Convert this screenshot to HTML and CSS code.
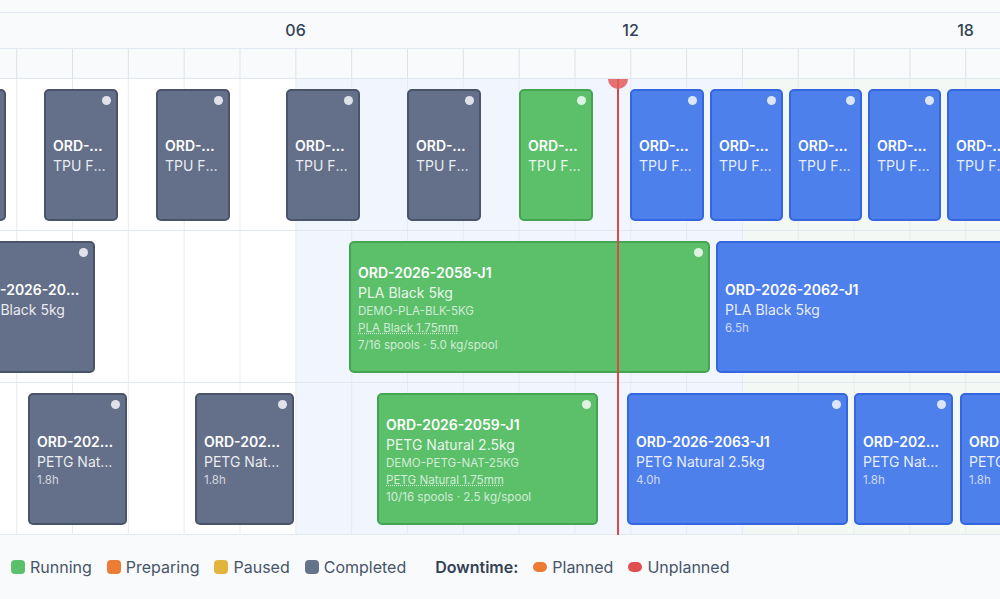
FILE: index.html
```html
<!DOCTYPE html>
<html lang="en">
<head>
    <meta charset="UTF-8">
    <meta name="viewport" content="width=device-width, initial-scale=1.0">
    <title>Production schedule</title>
    <link rel="stylesheet" href="styles.css">
</head>
<body>
    <div class="gantt">
        <div class="day-band"></div>

        <!-- Eje de horas -->
        <div class="axis-labels">
            <span class="hour-label">00</span>
            <span class="hour-label">06</span>
            <span class="hour-label">12</span>
            <span class="hour-label">18</span>
        </div>
        <div class="axis-ticks"></div>

        <!-- Filas de maquinas -->
        <div class="rows">
            <div class="row">
                <div class="job job-completed" style="left:-68px;width:74px"><b class="job-title">ORD-2026-2040-J1</b><span class="job-sub">TPU Flex 1kg</span></div>
                <div class="job job-completed" style="left:44px;width:74px"><b class="job-title">ORD-2026-2042-J1</b><span class="job-sub">TPU Flex 1kg</span></div>
                <div class="job job-completed" style="left:156px;width:74px"><b class="job-title">ORD-2026-2044-J1</b><span class="job-sub">TPU Flex 1kg</span></div>
                <div class="job job-completed" style="left:286px;width:74px"><b class="job-title">ORD-2026-2046-J1</b><span class="job-sub">TPU Flex 1kg</span></div>
                <div class="job job-completed" style="left:407px;width:74px"><b class="job-title">ORD-2026-2048-J1</b><span class="job-sub">TPU Flex 1kg</span></div>
                <div class="job job-running" style="left:519px;width:74px"><b class="job-title">ORD-2026-2050-J1</b><span class="job-sub">TPU Flex 1kg</span></div>
                <div class="job job-planned" style="left:630px;width:74px"><b class="job-title">ORD-2026-2064-J1</b><span class="job-sub">TPU Flex 1kg</span></div>
                <div class="job job-planned" style="left:710px;width:73px"><b class="job-title">ORD-2026-2065-J1</b><span class="job-sub">TPU Flex 1kg</span></div>
                <div class="job job-planned" style="left:789px;width:73px"><b class="job-title">ORD-2026-2066-J1</b><span class="job-sub">TPU Flex 1kg</span></div>
                <div class="job job-planned" style="left:868px;width:73px"><b class="job-title">ORD-2026-2067-J1</b><span class="job-sub">TPU Flex 1kg</span></div>
                <div class="job job-planned" style="left:947px;width:74px"><b class="job-title">ORD-2026-2068-J1</b><span class="job-sub">TPU Flex 1kg</span></div>
            </div>
            <div class="row">
                <div class="job job-completed" style="left:-39px;width:134px"><b class="job-title">ORD-2026-2054-J1</b><span class="job-sub">PLA Black 5kg</span><span class="job-small">6.5h</span></div>
                <div class="job job-running" style="left:349px;width:361px">
                    <b class="job-title">ORD-2026-2058-J1</b>
                    <span class="job-sub">PLA Black 5kg</span>
                    <span class="job-small">DEMO-PLA-BLK-5KG</span>
                    <span class="job-small"><abbr class="material" title="Material">PLA Black 1.75mm</abbr></span>
                    <span class="job-small">7/16 spools · 5.0 kg/spool</span>
                </div>
                <div class="job job-planned" style="left:716px;width:400px"><b class="job-title">ORD-2026-2062-J1</b><span class="job-sub">PLA Black 5kg</span><span class="job-small">6.5h</span></div>
            </div>
            <div class="row">
                <div class="job job-completed" style="left:28px;width:99px"><b class="job-title">ORD-2026-2051-J1</b><span class="job-sub">PETG Natural 2.5kg</span><span class="job-small">1.8h</span></div>
                <div class="job job-completed" style="left:195px;width:99px"><b class="job-title">ORD-2026-2053-J1</b><span class="job-sub">PETG Natural 2.5kg</span><span class="job-small">1.8h</span></div>
                <div class="job job-running" style="left:377px;width:221px">
                    <b class="job-title">ORD-2026-2059-J1</b>
                    <span class="job-sub">PETG Natural 2.5kg</span>
                    <span class="job-small">DEMO-PETG-NAT-25KG</span>
                    <span class="job-small"><abbr class="material" title="Material">PETG Natural 1.75mm</abbr></span>
                    <span class="job-small">10/16 spools · 2.5 kg/spool</span>
                </div>
                <div class="job job-planned" style="left:627px;width:221px"><b class="job-title">ORD-2026-2063-J1</b><span class="job-sub">PETG Natural 2.5kg</span><span class="job-small">4.0h</span></div>
                <div class="job job-planned" style="left:854px;width:99px"><b class="job-title">ORD-2026-2069-J1</b><span class="job-sub">PETG Natural 2.5kg</span><span class="job-small">1.8h</span></div>
                <div class="job job-planned" style="left:960px;width:99px"><b class="job-title">ORD-2026-2070-J1</b><span class="job-sub">PETG Natural 2.5kg</span><span class="job-small">1.8h</span></div>
            </div>
            <div class="now-line" style="left:617px"></div>
        </div>

        <!-- Leyenda -->
        <div class="legend">
            <span class="legend-item"><i class="swatch sw-running"></i>Running</span>
            <span class="legend-item"><i class="swatch sw-preparing"></i>Preparing</span>
            <span class="legend-item"><i class="swatch sw-paused"></i>Paused</span>
            <span class="legend-item"><i class="swatch sw-completed"></i>Completed</span>
            <span class="legend-title">Downtime:</span>
            <span class="legend-item"><i class="pill sw-preparing"></i>Planned</span>
            <span class="legend-item"><i class="pill sw-unplanned"></i>Unplanned</span>
        </div>
    </div>
</body>
</html>
```

FILE: styles.css
```css
body {
    margin: 0;
    padding: 0;
    font-family: Inter, "Noto Sans", sans-serif;
    background-color: #f8fafc;
    color: #334155;
  }
  .gantt {
    width: 1000px;
    height: 599px;
    overflow: hidden;
    display: flex;
    flex-direction: column;
  }
  /*Cabecera del dia*/
  .day-band {
    height: 12px;
    flex-shrink: 0;
    background-color: #f8fafc;
    border-bottom: 1px solid #e2e8f0;
  }
  /*Etiquetas de horas*/
  .axis-labels {
    display: flex;
    height: 35px;
    flex-shrink: 0;
    margin-left: -207px;
    border-bottom: 1px solid #e2e8f0;
  }
  .hour-label {
    width: 335px;
    flex-shrink: 0;
    text-align: center;
    line-height: 34px;
    font-size: 16px;
    font-weight: 500;
    color: #334155;
  }
  .axis-ticks {
    height: 29px;
    flex-shrink: 0;
    border-bottom: 1px solid #e2e8f0;
    background: linear-gradient(to right, #dde3ea 1px, transparent 1px) 16.2px 0 / 55.83px 100%;
  }
  /*Filas*/
  .rows {
    position: relative;
    overflow: hidden;
  }
  .row {
    position: relative;
    height: 152px;
    box-sizing: border-box;
    border-bottom: 1px solid #e2e8f0;
    background:
      linear-gradient(to right, #e6eaf1 1px, transparent 1px) 16.2px 0 / 55.83px 100%,
      linear-gradient(to right, #ffffff 296px, #f1f5fd 296px, #f1f5fd 743px, #f3f8f5 743px);
  }
  /*Tarjetas de trabajos*/
  .job {
    position: absolute;
    top: 10px;
    height: 132px;
    box-sizing: border-box;
    border: 2px solid;
    border-radius: 5px;
    padding: 2px 8px 0 7px;
    display: flex;
    flex-direction: column;
    justify-content: center;
    color: #ffffff;
    overflow: hidden;
  }
  .job::after {
    content: "";
    position: absolute;
    top: 5px;
    right: 5px;
    width: 9px;
    height: 9px;
    border-radius: 50%;
    background-color: rgba(255, 255, 255, 0.8);
  }
  .job-title,
  .job-sub,
  .job-small {
    white-space: nowrap;
    overflow: hidden;
    text-overflow: ellipsis;
  }
  .job-title {
    font-size: 14px;
    font-weight: 600;
    line-height: 20px;
  }
  .job-sub {
    font-size: 14px;
    line-height: 20px;
    color: rgba(255, 255, 255, 0.88);
  }
  .job-small {
    font-size: 11.6px;
    line-height: 17px;
    color: rgba(255, 255, 255, 0.72);
  }
  .material {
    text-decoration: underline dotted;
  }
  .job-completed {
    background-color: #64708a;
    border-color: #4a5468;
  }
  .job-running {
    background-color: #5cc06b;
    border-color: #45a454;
  }
  .job-planned {
    background-color: #4e80ec;
    border-color: #3466e2;
  }
  /*Linea de ahora*/
  .now-line {
    position: absolute;
    top: 0;
    bottom: 0;
    width: 2px;
    background-color: #e04848;
  }
  .now-line::before {
    content: "";
    position: absolute;
    top: -10px;
    left: -9px;
    width: 20px;
    height: 20px;
    border-radius: 50%;
    background-color: rgba(226, 90, 90, 0.85);
  }
  /*Leyenda*/
  .legend {
    flex: 1;
    display: flex;
    align-items: center;
    padding-left: 11px;
    font-size: 16px;
    color: #475569;
  }
  .legend-item {
    display: flex;
    align-items: center;
    margin-right: 15px;
  }
  .legend-title {
    margin: 0 15px 0 14px;
    font-weight: 600;
    color: #334155;
  }
  .swatch {
    width: 14px;
    height: 14px;
    border-radius: 4px;
    margin-right: 5px;
  }
  .pill {
    width: 14px;
    height: 10px;
    border-radius: 5px;
    margin-right: 5px;
  }
  .sw-running { background-color: #5cc06b; }
  .sw-preparing { background-color: #ec7b33; }
  .sw-paused { background-color: #e2b43e; }
  .sw-completed { background-color: #64748b; }
  .sw-unplanned { background-color: #e04f4f; }
```
